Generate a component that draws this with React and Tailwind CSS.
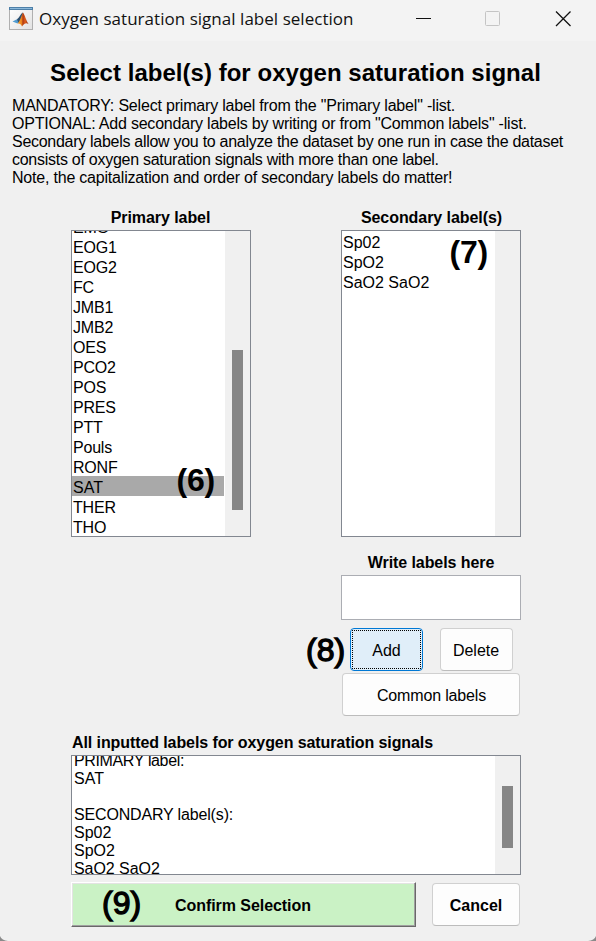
const primary = ["EMG", "EOG1", "EOG2", "FC", "JMB1", "JMB2", "OES", "PCO2", "POS", "PRES", "PTT", "Pouls", "RONF", "SAT", "THER", "THO"];
const secondary = ["Sp02", "SpO2", "SaO2 SaO2"];
const summary = [
  ["PRIMARY label:", "tracking-[-0.36px]"],
  ["SAT", ""],
  ["", ""],
  ["SECONDARY label(s):", "tracking-[-0.16px]"],
  ["Sp02", ""],
  ["SpO2", ""],
  ["SaO2 SaO2", "tracking-[-0.05px]"],
];

function MatlabIcon() {
  return (
    <svg className="block" width="24" height="24" viewBox="0 0 24 24">
      <defs>
        <linearGradient id="frame" x1="0" y1="0" x2="1" y2="1">
          <stop offset="0" stopColor="#ffffff" />
          <stop offset="1" stopColor="#e2e2e2" />
        </linearGradient>
        <linearGradient id="flame" x1="0" y1="0" x2="1" y2="0">
          <stop offset="0" stopColor="#f0a030" />
          <stop offset="0.35" stopColor="#f08a20" />
          <stop offset="0.5" stopColor="#b03a14" />
          <stop offset="0.7" stopColor="#e0601c" />
          <stop offset="1" stopColor="#8c2410" />
        </linearGradient>
      </defs>
      <rect x="0.5" y="0.5" width="23" height="22" fill="url(#frame)" stroke="#b0b0b0" />
      <rect x="0" y="0" width="24" height="3" fill="#4d7fa8" />
      <rect x="1" y="1" width="22" height="1" fill="#8ab8da" />
      <path d="M3.500 14.500 L8 12.200 L11 14 L8.500 16.500 Z" fill="#4f9bd0" />
      <path d="M8 12.200 C10.500 11 11.500 6.500 14 5.500 L12.500 13 L9.500 16 Z" fill="#2d5070" />
      <path d="M14 5.500 C15.800 7.500 17 13.500 19.500 17 C17 15.500 15.500 16.500 13 19.500 C12.200 17.500 11 16.300 8.500 16.500 C11.500 14 12.500 8 14 5.500 Z" fill="url(#flame)" />
    </svg>
  );
}

function Track({ children }) {
  return <div className="flex h-full w-[25px] shrink-0 flex-col bg-[#f0f0f0] pl-[7px]">{children}</div>;
}

function Callout({ className, children }) {
  return <span className={"absolute text-[32px] leading-[36px] " + className}>{children}</span>;
}

export default function App() {
  return (
    <div className="relative flex h-[941px] w-[596px] flex-col overflow-hidden bg-[#f0f0f0] font-['Liberation_Sans',Arial,sans-serif] text-[16px] leading-[18px] whitespace-pre text-black">
      <header className="flex h-[41px] shrink-0 items-start bg-[#f3f3f3] pl-[9px]">
        <div className="mt-[7px]"><MatlabIcon /></div>
        <span className="mt-[7px] ml-[6px] w-[376px] font-['Open_Sans','Noto_Sans',sans-serif] text-[17px] leading-6 tracking-[0.03px] text-[#111]">Oxygen saturation signal label selection</span>
        <svg width="160" height="16" viewBox="0 0 160 16" className="mt-[11px]" fill="none">
          <path d="M1 7.500H16" stroke="#111" />
          <rect x="70.500" y="0.500" width="14" height="14" rx="1" stroke="#c4c4c4" />
          <path d="M141 0.500L155.500 15M155.500 0.500L141 15" stroke="#111" strokeWidth="1.300" />
        </svg>
      </header>

      <h1 className="mt-[18px] mr-[5px] text-center text-[24px] leading-7 font-bold tracking-[0.03px]">Select label(s) for oxygen saturation signal</h1>
      <div className="mt-[10px] ml-3 h-[90px] shrink-0">
        <p className="tracking-[-0.19px]">MANDATORY: Select primary label from the "Primary label" -list.</p>
        <p className="tracking-[-0.21px]">OPTIONAL: Add secondary labels by writing or from "Common labels" -list.</p>
        <p className="tracking-[-0.285px]">Secondary labels allow you to analyze the dataset by one run in case the dataset</p>
        <p className="tracking-[-0.27px]">consists of oxygen saturation signals with more than one label.</p>
        <p className="tracking-[-0.205px]">Note, the capitalization and order of secondary labels do matter!</p>
      </div>

      <div className="mt-[22px] ml-[71px] flex w-[450px] justify-between">
        <section className="w-[180px]">
          <h2 className="mb-[3px] pr-px text-center font-bold tracking-[-0.06px]">Primary label</h2>
          <div className="flex h-[307px] overflow-hidden border border-[#828790] bg-white">
            <ul className="-mt-[15px] flex-1 tracking-[-0.2px]">
              {primary.map((t) => (
                <li key={t} className={t === "SAT" ? "mr-px h-5 bg-[#a9a9a9] pl-px leading-6 tracking-normal" : "h-5 pl-px leading-6"}>{t}</li>
              ))}
            </ul>
            <Track><div className="mt-[119px] h-[160px] w-[11px] bg-[#868686]" /></Track>
          </div>
        </section>
        <section className="w-[180px]">
          <h2 className="mb-[3px] pl-px text-center font-bold tracking-[-0.06px]">Secondary label(s)</h2>
          <div className="flex h-[307px] border border-[#828790] bg-white">
            <ul className="flex-1">
              {secondary.map((t) => <li key={t} className="h-5 pl-px leading-6">{t}</li>)}
            </ul>
            <Track />
          </div>
        </section>
      </div>

      <div className="mt-[17px] ml-[341px] w-[180px]">
        <h2 className="text-center font-bold tracking-[-0.08px]">Write labels here</h2>
        <div className="mt-[3px] h-[45px] border border-[#abadb3] bg-white" />
        <div className="mt-[8px] flex gap-[17px] pl-[9px]">
          <button className="h-[43px] w-[73px] rounded-[4px] border border-[#0078d4] bg-[#e0eef9] p-px"><span className="flex h-full items-center justify-center border border-dotted border-black pt-[2px]">Add</span></button>
          <button className="h-[43px] w-[73px] rounded-[4px] border border-[#d0d0d0] border-b-[#bcbcbc] bg-[#fdfdfd] pt-[2px] pr-px">Delete</button>
        </div>
        <button className="mt-[2px] ml-px block h-[43px] w-[178px] rounded-[4px] border border-[#d0d0d0] border-b-[#bcbcbc] bg-[#fdfdfd] pt-[2px] pl-px tracking-[-0.15px]">Common labels</button>
      </div>

      <div className="mt-[18px] ml-[71px] w-[450px]">
        <h2 className="pl-px font-bold tracking-[-0.09px]">All inputted labels for oxygen saturation signals</h2>
        <div className="mt-[3px] flex h-[120px] overflow-hidden border border-[#828790] bg-white">
          <div className="-mt-[4px] flex-1 pl-[2px]">
            {summary.map(([text, tracking], i) => <p key={i} className={"h-[18px] " + tracking}>{text}</p>)}
          </div>
          <Track><div className="mt-[30px] h-[62px] w-[11px] bg-[#868686]" /></Track>
        </div>
        <div className="mt-[7px] flex gap-4">
          <button className="h-[45px] w-[345px] border border-t-white border-r-[#696969] border-b-[#696969] border-l-white bg-[#caf2c5] pt-[2px] pr-px font-bold tracking-[-0.06px] shadow-[inset_-1px_-1px_0_#a0a0a0,inset_1px_1px_0_#e3e3e3]">Confirm Selection</button>
          <button className="mt-px h-[43px] w-[88px] rounded-[4px] border border-[#d0d0d0] border-b-[#bcbcbc] bg-[#fdfdfd] pt-[2px] font-bold">Cancel</button>
        </div>
      </div>

      <Callout className="top-[462px] left-[176.5px] font-bold tracking-[-0.2px]">(6)</Callout>
      <Callout className="top-[234px] left-[449.5px] font-bold tracking-[-0.2px]">(7)</Callout>
      <Callout className="top-[632px] left-[306px] [-webkit-text-stroke:1.3px_black]">(8)</Callout>
      <Callout className="top-[885px] left-[102px] [-webkit-text-stroke:1.3px_black]">(9)</Callout>

      <svg className="absolute bottom-0 left-0" width="8" height="5" viewBox="0 0 8 5">
        <path d="M0 0C1 3 4 4.500 8 5H0Z" fill="#8a8a8a" />
      </svg>
      <svg className="absolute right-0 bottom-0" width="8" height="5" viewBox="0 0 8 5">
        <path d="M8 0C7 3 4 4.500 0 5H8Z" fill="#8a8a8a" />
      </svg>
    </div>
  );
}
